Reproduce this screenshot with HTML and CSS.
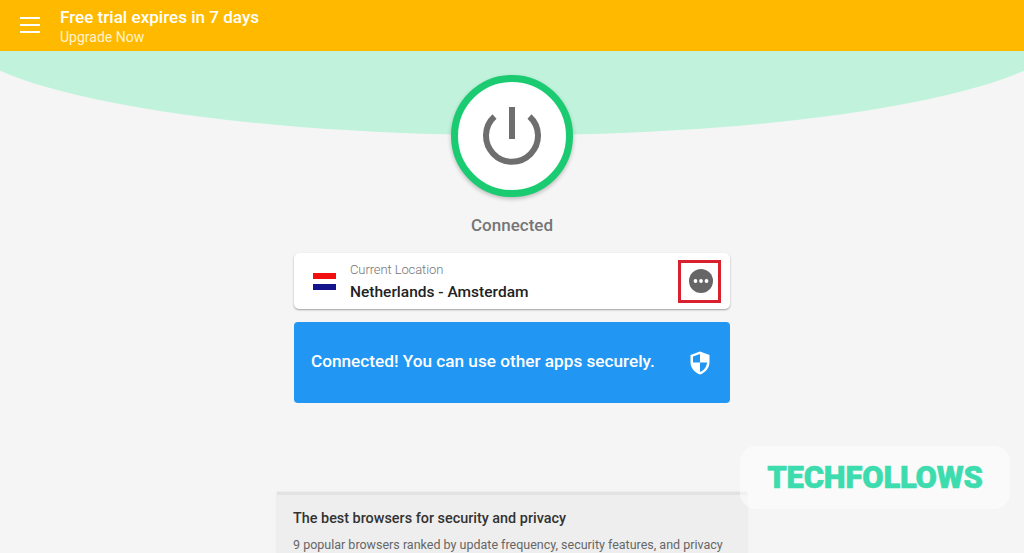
FILE: index.html
```html
<!DOCTYPE html>
<html lang="en">
<head>
<meta charset="utf-8">
<title>VPN Connected</title>
<link rel="stylesheet" href="styles.css">
</head>
<body>
<div class="app">
  <header class="topbar">
    <button class="menu" aria-label="Menu"><span></span><span></span><span></span></button>
    <div class="trial">
      <div class="trial-title">Free trial expires in 7 days</div>
      <div class="trial-link">Upgrade Now</div>
    </div>
  </header>
  <main class="content">
    <div class="arc"></div>
    <div class="power">
      <svg class="power-icon" viewBox="0 0 60 60" width="60" height="60" aria-hidden="true">
        <path d="M12.5 9.5A26 26 0 1 0 47.5 9.5" fill="none" stroke="#6e6e6e" stroke-width="6"/>
        <rect x="27" y="0" width="6" height="32" fill="#6e6e6e"/>
      </svg>
    </div>
    <div class="status">Connected</div>
    <section class="location">
      <div class="flag"><i class="red"></i><i class="white"></i><i class="blue"></i></div>
      <div class="place">
        <div class="place-label">Current Location</div>
        <div class="place-name">Netherlands - Amsterdam</div>
      </div>
      <div class="more-box">
        <svg viewBox="0 0 24 24" width="24" height="24" aria-hidden="true">
          <circle cx="12" cy="12" r="12" fill="#666"/>
          <circle cx="6.5" cy="12" r="1.9" fill="#fff"/>
          <circle cx="12" cy="12" r="1.9" fill="#fff"/>
          <circle cx="17.5" cy="12" r="1.9" fill="#fff"/>
        </svg>
      </div>
    </section>
    <section class="notice">
      <span>Connected! You can use other apps securely.</span>
      <svg viewBox="0 0 20 24" width="20" height="24" aria-hidden="true">
        <path d="M10 0.5L19.5 4V11C19.5 17 15.5 21.5 10 23.5C4.5 21.5 0.5 17 0.5 11V4Z" fill="#fff"/>
        <path d="M10 3L3 5.6V11.5H10ZM10 11.5V21C14 19.3 16.7 15.8 17 11.5Z" fill="#2196f3"/>
      </svg>
    </section>
    <article class="ad">
      <h2>The best browsers for security and privacy</h2>
      <p>9 popular browsers ranked by update frequency, security features, and privacy</p>
    </article>
    <div class="watermark"><span>TECHFOLLOWS</span></div>
  </main>
</div>
</body>
</html>
```
FILE: styles.css
```css
* { box-sizing: border-box; }
html, body { margin: 0; height: 100%; overflow: hidden; }
body { background: #f5f5f5; font-family: Roboto, "Liberation Sans", sans-serif; }
.app { height: 553px; display: flex; flex-direction: column; overflow: hidden; }
.topbar {
  height: 51px; flex: none; background: #ffba00; color: #fff;
  display: flex; align-items: center; position: relative; z-index: 2;
}
.menu {
  width: 60px; height: 51px; padding: 0 0 1px 0; border: 0; background: none;
  display: flex; flex-direction: column; align-items: center; justify-content: center; gap: 5px;
}
.menu span { width: 20px; height: 2px; background: #fff; display: block; }
.trial { padding-top: 2px; }
.trial-title { font-size: 17px; font-weight: 500; line-height: 22px; letter-spacing: .03px; }
.trial-link { font-size: 14px; line-height: 19px; color: #fff3d0; }
.content {
  position: relative; flex: 1; display: flex; flex-direction: column; align-items: center;
  padding-top: 24px;
}
.arc {
  position: absolute; left: -48px; top: -132px; width: 1120px; height: 216px;
  border-radius: 50%; background: #c1f3dc;
}
.power {
  position: relative; width: 122px; height: 122px; flex: none; border-radius: 50%;
  background: #fff; border: 7px solid #1bcb72; box-shadow: 0 2px 4px rgba(0,0,0,.25);
  display: flex; align-items: center; justify-content: center;
}
.power-icon { margin-top: 1px; margin-left: -1px; }
.status {
  margin-top: 16px; font-size: 17px; font-weight: 500; line-height: 24px; color: #757575;
}
.location {
  margin-top: 16px; width: 436px; height: 56px; flex: none; background: #fff; border-radius: 5px;
  box-shadow: 0 1px 2px rgba(0,0,0,.35); display: flex; align-items: center; padding-left: 19px;
}
.flag { width: 23px; display: flex; flex-direction: column; }
.flag i { height: 6px; display: block; }
.flag .red { background: #f10f0f; }
.flag .white { background: #fff; height: 5px; }
.flag .blue { background: #14148c; }
.place { margin-left: 14px; flex: 1; padding-top: 1px; }
.place-label { font-size: 13px; font-weight: 300; line-height: 16px; color: #757575; letter-spacing: -.1px; }
.place-name { font-size: 15.5px; font-weight: 500; line-height: 20px; color: #222; margin-top: 4px; }
.more-box {
  width: 43px; height: 43px; margin-right: 9px; border: 3px solid #d9202f;
  display: flex; align-items: center; justify-content: center;
}
.more-box svg { margin-left: 3px; }
.notice {
  margin-top: 13px; width: 436px; height: 81px; flex: none; background: #2196f3; border-radius: 4px;
  color: #fff; display: flex; align-items: center; justify-content: space-between;
  padding: 0 20px 3px 17px; font-size: 17.2px; font-weight: 500;
}
.notice svg { margin-top: 3px; }
.ad {
  margin-top: 89px; width: 470px; flex: none; background: #eee; border-top: 3px solid #e2e2e2;
  box-shadow: 0 0 2px rgba(0,0,0,.1); padding: 14px 16px 0; height: 62px;
}
.ad h2 { margin: 0; font-size: 14.4px; font-weight: 500; line-height: 20px; color: #333; }
.ad p { margin: 8px 0 0; font-size: 12.5px; font-weight: 400; line-height: 16px; color: #666; white-space: nowrap; }
.watermark {
  position: absolute; left: 740px; top: 395px; width: 270px; height: 63px; border-radius: 16px;
  background: rgba(255,255,255,.5); display: flex; align-items: center; justify-content: center;
}
.watermark span {
  font-family: Roboto, sans-serif; font-weight: 900; font-size: 31px; letter-spacing: -.2px;
  line-height: 1; color: #3ddcae; -webkit-text-stroke: .6px #3ddcae;
}
```
